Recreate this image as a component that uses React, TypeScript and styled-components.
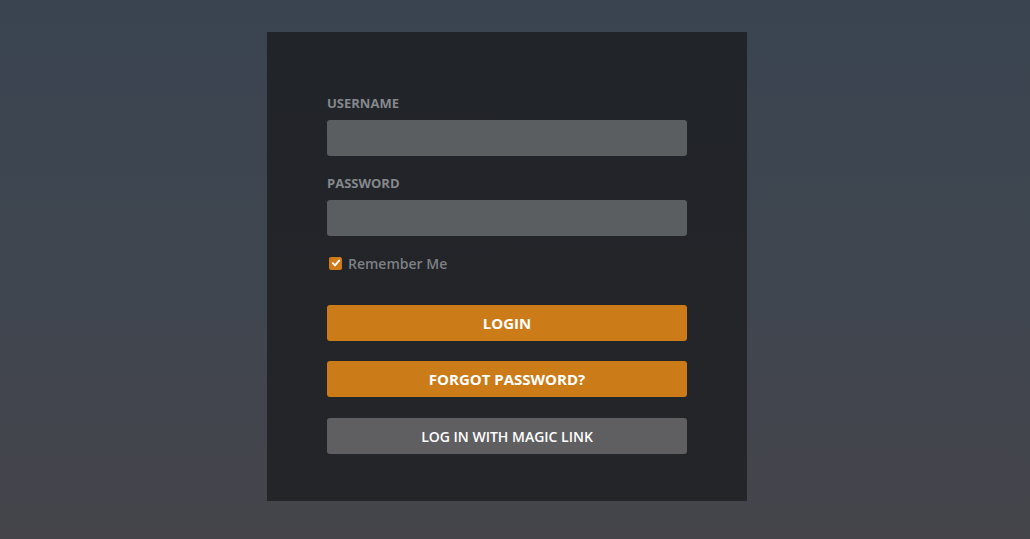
import React from "react";
import styled, { createGlobalStyle } from "styled-components";

const GlobalStyle = createGlobalStyle`
  html, body { margin: 0; padding: 0; height: 100%; }
  body {
    font-family: "Open Sans", "Noto Sans", sans-serif;
    background: linear-gradient(180deg, #3a4450 0%, #3f4650 50%, #45444b 100%);
    min-height: 539px;
  }
  * { box-sizing: border-box; }
`;

const Page = styled.div`
  display: flex;
  justify-content: center;
  padding: 32px 16px 0 0;
  height: 539px;
`;

const Card = styled.form`
  width: 480px;
  height: 469px;
  background: linear-gradient(180deg, #212429 0%, #242528 100%);
  padding: 61px 60px 0;
  display: flex;
  flex-direction: column;
`;

const Label = styled.label<{ $top?: number }>`
  display: block;
  font-size: 13px;
  font-weight: 700;
  line-height: 20px;
  color: #85888c;
  text-transform: uppercase;
  margin-top: ${(p) => p.$top ?? 0}px;
  margin-bottom: 7px;
`;

const Input = styled.input`
  width: 360px;
  height: 36px;
  border: none;
  border-radius: 3px;
  background: #5b5e61;
  color: #eee;
  font-family: inherit;
  font-size: 14px;
  padding: 0 10px;
  outline: none;
`;

const CheckRow = styled.label`
  display: flex;
  align-items: center;
  gap: 6px;
  height: 20px;
  margin-top: 17px;
  font-size: 14px;
  font-weight: 600;
  color: #7d8084;
`;

const Box = styled.span`
  width: 13px;
  height: 13px;
  margin-left: 2px;
  border-radius: 2px;
  background: #cf7b18;
  display: flex;
  align-items: center;
  justify-content: center;
`;

const Button = styled.button<{ $variant: "primary" | "secondary"; $top: number }>`
  width: 360px;
  height: 36px;
  border: none;
  border-radius: 3px;
  margin-top: ${(p) => p.$top}px;
  background: ${(p) => (p.$variant === "primary" ? "#cc7b19" : "#5f5f61")};
  color: #fff;
  font-family: inherit;
  font-size: ${(p) => (p.$variant === "primary" ? "15px" : "14px")};
  font-weight: ${(p) => (p.$variant === "primary" ? 700 : 600)};
  text-transform: uppercase;
  cursor: pointer;
  padding: 0;
`;

export default function App() {
  return (
    <>
      <GlobalStyle />
      <Page>
        <Card onSubmit={(e) => e.preventDefault()}>
          <Label htmlFor="username">Username</Label>
          <Input id="username" type="text" />
          <Label htmlFor="password" $top={17}>Password</Label>
          <Input id="password" type="password" />
          <CheckRow>
            <Box>
              <svg width="10" height="10" viewBox="0 0 10 10">
                <path d="M1.8 5.2 L4 7.4 L8.3 2.4" fill="none" stroke="#fff" strokeWidth="1.9" strokeLinecap="round" strokeLinejoin="round" />
              </svg>
            </Box>
            Remember Me
          </CheckRow>
          <Button type="submit" $variant="primary" $top={32}>Login</Button>
          <Button type="button" $variant="primary" $top={20}>Forgot Password?</Button>
          <Button type="button" $variant="secondary" $top={21}>Log in with Magic Link</Button>
        </Card>
      </Page>
    </>
  );
}
